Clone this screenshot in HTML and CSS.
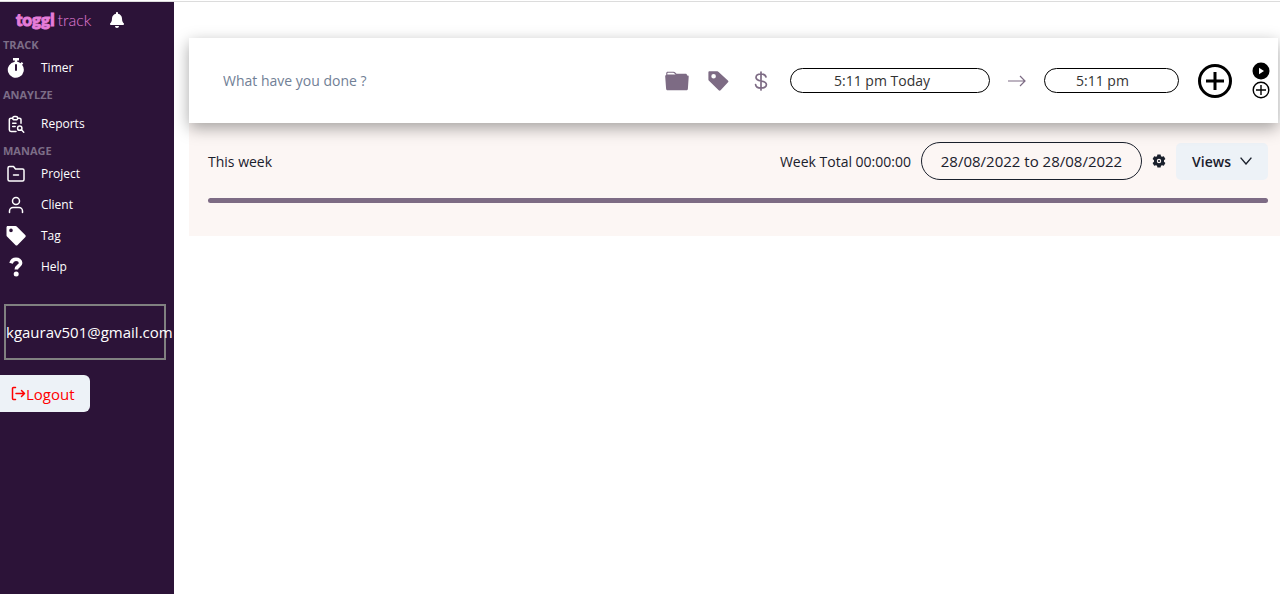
FILE: index.html
```html
<!DOCTYPE html>
<html lang="en">
<head>
<meta charset="utf-8">
<meta name="viewport" content="width=device-width, initial-scale=1">
<title>Toggl Track</title>
<link rel="stylesheet" href="styles.css">
</head>
<body>
    <div class="page">
        <nav class="sidebar">
            <div class="brand">
                <a href="#" class="logo"><span class="logo-bold">toggl</span><span class="logo-thin">track</span></a>
                <button class="icon-button bell" aria-label="Notifications">
                    <svg width="14" height="16" viewBox="0 0 448 512" fill="currentColor"><path d="M224 512c35 0 64-29 64-64H160c0 35 28 64 64 64zm215-150c-19-21-55-52-55-154 0-78-54-140-128-155V32c0-18-14-32-32-32s-32 14-32 32v21C118 68 64 130 64 208c0 102-36 133-55 154-6 6-9 14-9 22 0 16 13 32 32 32h384c19 0 32-16 32-32 0-8-3-16-9-22z"/></svg>
                </button>
            </div>

            <h2 class="nav-heading">TRACK</h2>
            <a href="#" class="nav-link nav-last">
                <svg width="20" height="20" viewBox="0 0 20 20"><path fill="currentColor" d="M7 0h6v2.400h-1.800v1.400a7.900 7.900 0 0 1 3.300 1.400l1.300-1.300 1.500 1.500-1.200 1.400A8 8 0 1 1 8.800 3.800V2.400H7z"/><rect x="9" y="6" width="2" height="7" rx="1" fill="#2c1338"/></svg>
                <span>Timer</span>
            </a>

            <h2 class="nav-heading">ANAYLZE</h2>
            <a href="#" class="nav-link nav-spaced nav-last">
                <svg width="20" height="20" viewBox="0 0 24 24" fill="none" stroke="currentColor" stroke-width="1.800" stroke-linecap="round" stroke-linejoin="round"><path d="M8 5H6a2 2 0 0 0-2 2v12a2 2 0 0 0 2 2h6"/><path d="M18 11V7a2 2 0 0 0-2-2h-2"/><rect x="8" y="3" width="6" height="4" rx="2"/><path d="M8 11h4M8 15h3"/><circle cx="16.500" cy="17" r="2.600"/><path d="M18.500 19l2.800 2.800"/></svg>
                <span>Reports</span>
            </a>

            <h2 class="nav-heading">MANAGE</h2>
            <a href="#" class="nav-link">
                <svg width="20" height="20" viewBox="0 0 20 20" fill="none" stroke="currentColor" stroke-width="1.500" stroke-linecap="round" stroke-linejoin="round"><path d="M2 4a1.500 1.500 0 0 1 1.500-1.500h4L9.500 5h7A1.500 1.500 0 0 1 18 6.500v9a1.500 1.500 0 0 1-1.500 1.500h-13A1.500 1.500 0 0 1 2 15.500zM7.500 11h5"/></svg>
                <span>Project</span>
            </a>
            <a href="#" class="nav-link">
                <svg width="20" height="20" viewBox="0 0 20 20" fill="none" stroke="currentColor" stroke-width="1.500" stroke-linecap="round"><circle cx="10" cy="6" r="3.500"/><path d="M3.500 17.500V16A3.500 3.500 0 0 1 7 12.500h6a3.500 3.500 0 0 1 3.500 3.500v1.500"/></svg>
                <span>Client</span>
            </a>
            <a href="#" class="nav-link">
                <svg width="20" height="20" viewBox="0 0 20 20" fill="currentColor"><path fill-rule="evenodd" d="M1.500 0H9.500c.5 0 .9.200 1.200.500l8.500 8.600c.7.700.7 1.500 0 2.200l-7.600 7.600c-.7.700-1.500.7-2.200 0L1 10.400c-.3-.3-.5-.7-.5-1.200V1.500C.5.600 1 0 1.500 0zM5 2.600a1.800 1.800 0 1 0 0 3.600 1.800 1.800 0 0 0 0-3.600z"/></svg>
                <span>Tag</span>
            </a>
            <a href="#" class="nav-link">
                <svg width="20" height="20" viewBox="0 0 20 20"><path fill="none" stroke="currentColor" stroke-width="3.600" d="M5 6.200C5.800 3.600 7.700 2.300 10 2.300c2.700 0 4.600 1.500 4.600 3.600 0 3.200-4.300 3-4.300 6.600"/><circle cx="10.200" cy="17" r="2.500" fill="currentColor"/></svg>
                <span>Help</span>
            </a>

            <div class="account">kgaurav501@gmail.com</div>
            <button class="logout">
                <svg width="15" height="15" viewBox="0 0 15 15" fill="none" stroke="currentColor" stroke-width="1.500" stroke-linecap="round" stroke-linejoin="round"><path d="M4.500 1.500h-2a1 1 0 0 0-1 1v10a1 1 0 0 0 1 1h2M5 7.500h8.500M10.500 4.500l3 3-3 3"/></svg>Logout
            </button>
        </nav>

        <main class="content">
            <form class="tracker">
                <input type="text" class="task-input" placeholder="What have you done ?" aria-label="What have you done ?">
                <div class="task-tools">
                    <button type="button" class="icon-button" aria-label="Project">
                        <svg width="24" height="20" viewBox="0 0 24 20"><path fill="currentColor" d="M1.200 4V2.200C1.200 1.300 1.900.700 2.700.7h5.800c.8 0 1.500.4 2 1l1 1.100h9c.9 0 1.600.7 1.600 1.600h.4c.8 0 1.300.5 1.200 1.300l-.8 12c-.1.900-.8 1.600-1.700 1.600H2.800c-.9 0-1.600-.7-1.700-1.600L.2 5.400C.1 4.600.5 4.100 1.200 4z"/><path d="M2.300 3.600V2.500c0-.4.300-.7.700-.7h5.200c.5 0 1 .2 1.300.6l1.100 1.200z" fill="#fff"/></svg>
                    </button>
                    <button type="button" class="icon-button" aria-label="Tags">
                        <svg width="21" height="20" viewBox="0 0 21 20"><path fill="currentColor" fill-rule="evenodd" d="M1.500.3h7.700c.6 0 1 .2 1.400.6l9.300 8.500c.6.600.7 1.300.1 1.900l-7.400 7.900c-.6.600-1.300.6-1.900 0L1 9.800c-.4-.4-.6-.8-.6-1.300V1.500C.4.800.8.300 1.500.3zM5.600 3a2.300 2.300 0 1 0 0 4.600 2.300 2.300 0 0 0 0-4.600z"/></svg>
                    </button>
                    <button type="button" class="icon-button" aria-label="Billable">
                        <svg width="14" height="20" viewBox="0 0 14 20" fill="none" stroke="currentColor" stroke-width="1.700" stroke-linecap="round"><path d="M12 6C11.600 4 9.800 3 7 3 4 3 2 4.200 2 6.400c0 5 10.400 2.200 10.400 7.200C12.400 16 10 17.100 7 17.100c-3.200 0-5.100-1.300-5.400-3.500M7 1v18"/></svg>
                    </button>
                </div>
                <input type="text" class="time-input time-start" value="5:11 pm Today" aria-label="Start time">
                <svg class="arrow" width="18" height="16" viewBox="0 0 18 16" fill="none" stroke="currentColor" stroke-width="1.200"><path d="M0 8h17M12 3l5 5-5 5"/></svg>
                <input type="text" class="time-input time-end" value="5:11 pm" aria-label="End time">
                <button type="submit" class="icon-button add" aria-label="Add entry">
                    <svg width="34" height="34" viewBox="0 0 34 34" fill="none" stroke="currentColor" stroke-width="3"><circle cx="17" cy="17" r="15.500"/><path d="M17 8v18M8 17h18"/></svg>
                </button>
                <div class="modes">
                    <button type="button" class="icon-button" aria-label="Timer mode">
                        <svg width="18" height="18" viewBox="0 0 18 18"><circle cx="9" cy="9" r="8.500" fill="currentColor"/><path d="M7 5.700v6.600L12 9z" fill="#fff"/></svg>
                    </button>
                    <button type="button" class="icon-button" aria-label="Manual mode">
                        <svg width="18" height="18" viewBox="0 0 18 18" fill="none" stroke="currentColor" stroke-width="1.400"><circle cx="9" cy="9" r="7.800"/><path d="M9 4v10M4 9h10"/></svg>
                    </button>
                </div>
            </form>

            <section class="week">
                <div class="week-bar">
                    <span class="week-name">This week</span>
                    <span>Week Total 00:00:00</span>
                    <button class="date-range">28/08/2022 to 28/08/2022</button>
                    <button class="icon-button settings" aria-label="Settings">
                        <svg width="14" height="14" viewBox="0 0 14 14"><path fill="currentColor" fill-rule="evenodd" d="M5.400.4h3.200l.4 1.800 1 .6 1.800-.6 1.600 2.800L12 6.300v1.400L13.400 9l-1.600 2.800-1.800-.6-1 .6-.4 1.800H5.400L5 11.800l-1-.6-1.800.6L.6 9 2 7.700V6.300L.6 5l1.600-2.800 1.800.6 1-.6zM7 4.800a2.200 2.200 0 1 0 0 4.400 2.200 2.200 0 0 0 0-4.400z"/><circle cx="7" cy="7" r="1.100" fill="currentColor"/></svg>
                    </button>
                    <button class="views">Views
                        <svg width="12" height="8" viewBox="0 0 12 8" fill="none" stroke="currentColor" stroke-width="1.400"><path d="M.6.600 6 7 11.400.6"/></svg>
                    </button>
                </div>
                <hr class="week-line">
            </section>
        </main>
    </div>
</body>
</html>
```
FILE: styles.css
```css
* {
    box-sizing: border-box;
}
body {
    margin: 0;
    padding-top: 1px;
    font-family: "Open Sans", "Noto Sans", sans-serif;
    font-size: 14px;
    color: #1a202c;
    background: #fff;
}
button, input {
    font: inherit;
    color: inherit;
}
button {
    cursor: pointer;
}
svg {
    display: block;
    flex: none;
}
.page {
    display: flex;
    min-height: calc(100vh - 1px);
    border-top: 1px solid #dcdcdc;
}
.icon-button {
    padding: 0;
    border: none;
    background: none;
}

/* Sidebar */
.sidebar {
    flex: none;
    width: 174px;
    background: #2c1338;
    color: #fff;
}
.brand {
    display: flex;
    align-items: center;
    gap: 19px;
    height: 35px;
    padding-left: 16px;
}
.logo {
    display: flex;
    align-items: baseline;
    gap: 3px;
    color: #e57cd8;
    font-family: "Lato", sans-serif;
    line-height: 20px;
    text-decoration: none;
}
.logo-bold {
    font-size: 17px;
    font-weight: 900;
    -webkit-text-stroke: 1px #e57cd8;
}
.logo-thin {
    font-size: 16px;
    font-weight: 300;
}
.nav-heading {
    margin: 0;
    padding-left: 3px;
    font-size: 11px;
    font-weight: 700;
    line-height: 16px;
    color: #7c6d87;
}
.nav-link {
    display: flex;
    align-items: center;
    gap: 15px;
    height: 31px;
    padding: 0 0 2px 6px;
    font-size: 12px;
    font-weight: 500;
    color: #fff;
    text-decoration: none;
}
.nav-spaced {
    margin-top: 6px;
}
.nav-last {
    margin-bottom: 3px;
}
.account {
    margin: 21px 8px 15px 4px;
    border: 2px solid #808080;
    font-size: 15px;
    line-height: 52px;
    white-space: nowrap;
}
.logout {
    display: flex;
    align-items: center;
    height: 37px;
    padding: 0 15px 0 11px;
    border: none;
    border-radius: 0 6px 6px 0;
    background: #edf2f7;
    color: #f00;
    font-size: 15px;
    font-weight: 500;
}

/* Main area */
.content {
    flex: 1;
    min-width: 0;
    padding: 36px 0 0 15px;
}
.tracker {
    position: relative;
    display: flex;
    align-items: center;
    height: 85px;
    margin-right: 2px;
    padding: 0 8px 0 34px;
    background: #fff;
    box-shadow: 0 5px 15px rgba(0, 0, 0, 0.35);
}
.task-input {
    flex: 1;
    min-width: 0;
    padding: 0;
    border: none;
    outline: none;
    background: none;
}
.task-input::placeholder {
    color: #718096;
    opacity: 1;
}
.task-tools {
    display: flex;
    align-items: center;
    gap: 19px;
    margin: 0 22px;
    color: #7d6b84;
}
.task-tools .icon-button:last-child {
    margin-left: 6px;
}
.time-input {
    height: 25px;
    border: 1px solid #000;
    border-radius: 13px;
    background: #fff;
    color: #333;
}
.time-start {
    width: 200px;
    padding: 0 0 0 43px;
}
.time-end {
    width: 135px;
    padding: 0 0 0 31px;
}
.arrow {
    margin: 0 18px;
    color: #7d6b84;
}
.add {
    margin: 0 20px 0 19px;
    color: #000;
}
.modes {
    display: grid;
    gap: 1px;
    color: #000;
}

/* Week summary */
.week {
    padding: 19px 12px 33px 19px;
    background: #fcf6f4;
}
.week-bar {
    display: flex;
    align-items: center;
    gap: 10px;
    height: 38px;
}
.week-name {
    flex: 1;
}
.date-range {
    width: 221px;
    height: 38px;
    padding: 0;
    border: 1px solid #1a202c;
    border-radius: 19px;
    background: none;
    font-size: 15px;
}
.views {
    display: flex;
    align-items: center;
    justify-content: center;
    gap: 9px;
    width: 92px;
    height: 37px;
    padding: 0;
    border: none;
    border-radius: 5px;
    background: #edf2f7;
    font-weight: 600;
}
.week-line {
    height: 5px;
    margin: 18px 0 0;
    border: none;
    border-radius: 3px;
    background: #7d6b84;
}
```
